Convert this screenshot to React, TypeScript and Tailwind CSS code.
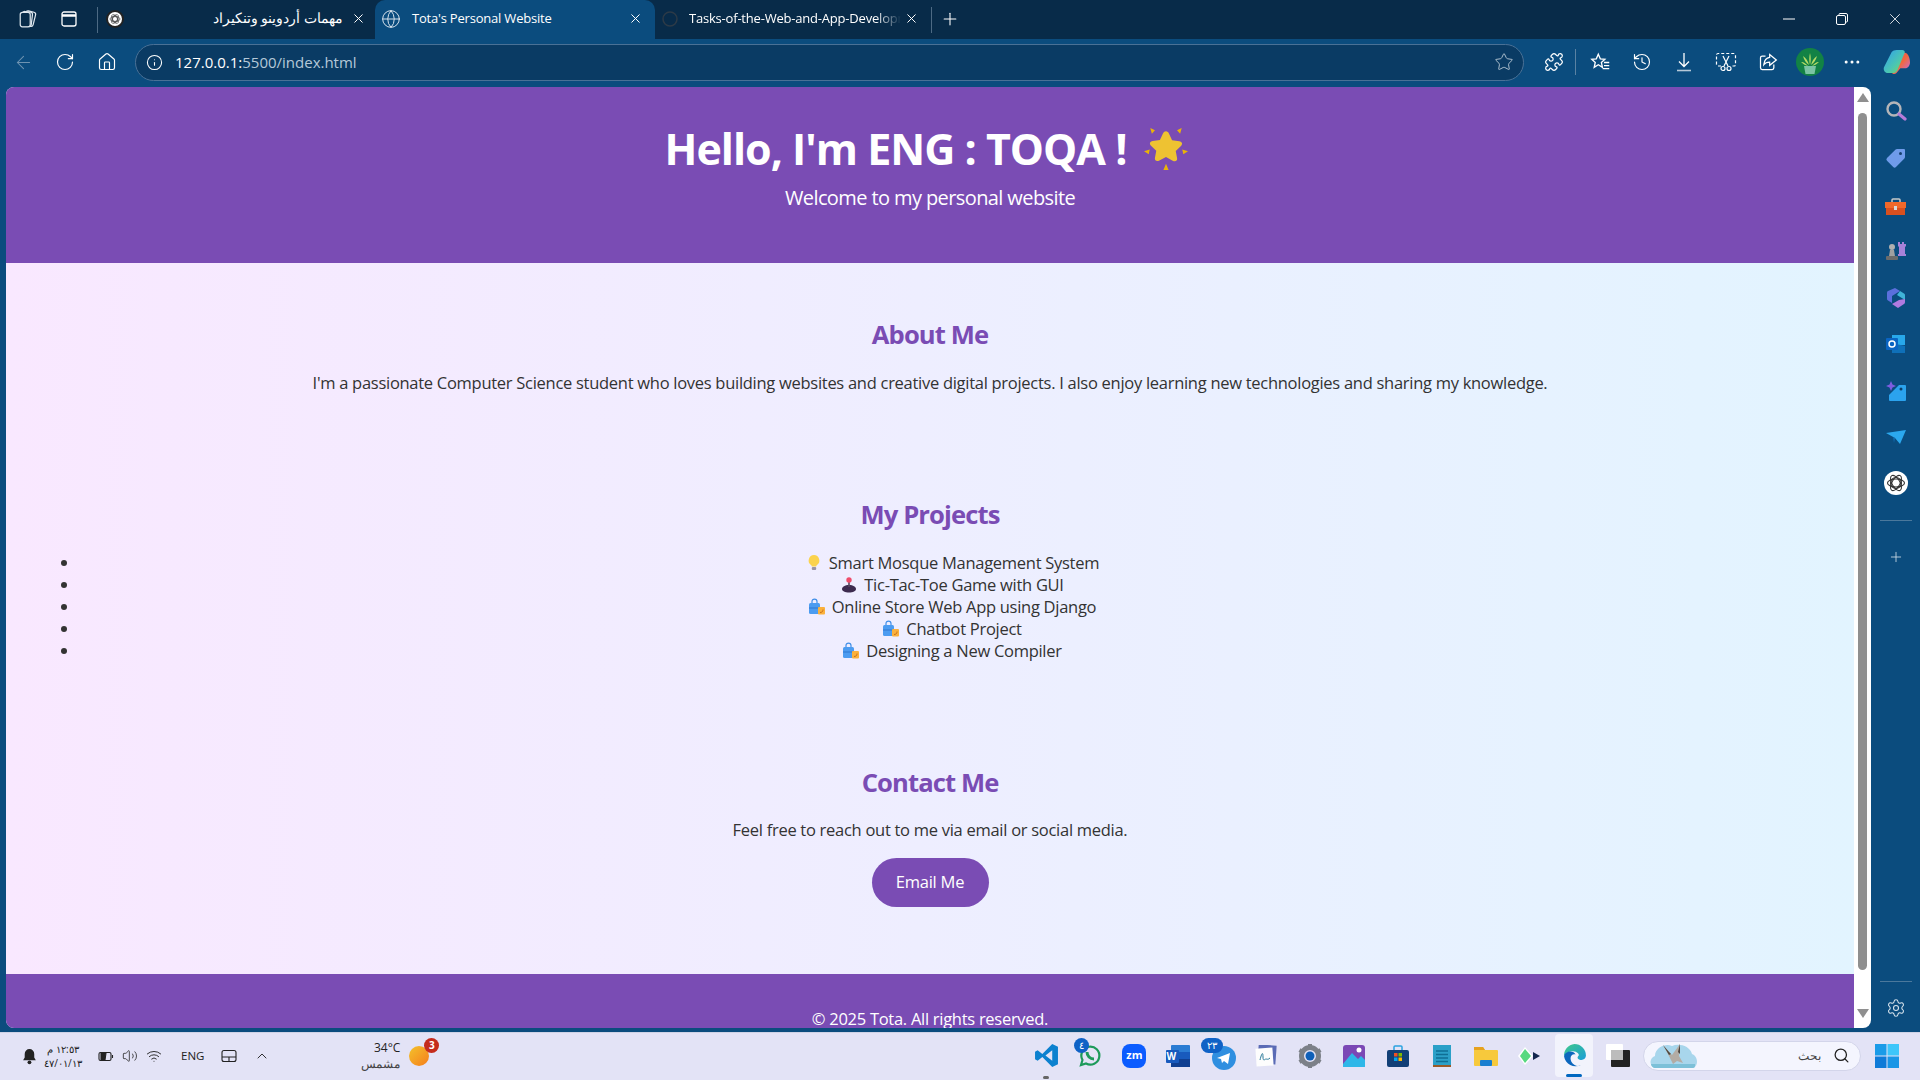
import {
  ArrowLeft,
  ChevronUp,
  Globe,
  History,
  Home,
  Info,
  MoreHorizontal,
  Plus,
  Puzzle,
  RotateCw,
  Search,
  Settings,
  Star,
  Volume2,
  Wifi,
  X,
} from 'lucide-react'

const FONT = 'font-["Open_Sans","Noto_Sans",sans-serif]'

const PROJECTS = [
  { icon: 'bulb', label: 'Smart Mosque Management System' },
  { icon: 'joy', label: 'Tic-Tac-Toe Game with GUI' },
  { icon: 'bag', label: 'Online Store Web App using Django' },
  { icon: 'bag', label: 'Chatbot Project' },
  { icon: 'bag', label: 'Designing a New Compiler' },
]

function GptIcon({ size = 16 }: { size?: number }) {
  return (
    <svg width={size} height={size} viewBox="0 0 24 24" fill="none" stroke="#333" strokeWidth="1.100">
      <circle cx="12" cy="12" r="12" fill="#fff" stroke="none" />
      <ellipse cx="12" cy="12" rx="8.500" ry="4" />
      <ellipse cx="12" cy="12" rx="8.500" ry="4" transform="rotate(60 12 12)" />
      <ellipse cx="12" cy="12" rx="8.500" ry="4" transform="rotate(120 12 12)" />
      <circle cx="12" cy="12" r="5.500" />
    </svg>
  )
}

function ProjectIcon({ name }: { name: string }) {
  if (name === 'bulb') {
    return (
      <svg width="18" height="18" viewBox="0 0 18 18" className="shrink-0">
        <path d="M9 1a5.500 5.500 0 0 0-3 10c.6.5.8 1 .8 1.600h4.400c0-.6.2-1.100.8-1.600A5.500 5.500 0 0 0 9 1z" fill="#fbd34d" />
        <rect x="6.800" y="13" width="4.400" height="3" rx="1" fill="#9a94a5" />
      </svg>
    )
  }
  if (name === 'joy') {
    return (
      <svg width="18" height="18" viewBox="0 0 18 18" className="shrink-0">
        <path d="M2 13c0-2 3-4 7-4s7 2 7 4-3 3.500-7 3.500S2 15 2 13z" fill="#3d2b4f" />
        <rect x="8.200" y="4" width="1.600" height="7" fill="#57465f" />
        <circle cx="9" cy="4" r="2.700" fill="#ef4c6a" />
      </svg>
    )
  }
  return (
    <svg width="18" height="18" viewBox="0 0 18 18" className="shrink-0">
      <path d="M4 5V3.500C4 2 5 1.200 6.500 1.200S9 2 9 3.500V5" fill="none" stroke="#3f8ee8" strokeWidth="1.200" />
      <rect x="1" y="5" width="11" height="11" rx="1.500" fill="#4c9cf1" />
      <rect x="1" y="9.500" width="11" height="1" fill="#2f76cf" />
      <rect x="10" y="9" width="7" height="7.500" rx="1" fill="#fbb13c" />
      <path d="M12 14.500c2 0 3-1 3-3" fill="none" stroke="#c9701a" strokeWidth="1" />
    </svg>
  )
}

function StarEmoji() {
  return (
    <svg width="44" height="44" viewBox="0 0 42 42" className="shrink-0">
      <path d="M21 5c1.300 0 2.200.9 2.800 2.200l3 6.300 6.900 1c2.800.4 3.400 2.800 1.600 4.500l-5 4.800 1.300 7c.4 2.400-1.800 3.600-3.800 2.500L21 29.500l-6.800 3.600c-2.100 1.100-4.200-.2-3.800-2.500l1.300-7-5-4.800c-1.800-1.700-1.200-4.100 1.600-4.500l6.900-1 3-6.300C18.800 5.900 19.700 5 21 5z" fill="#eec232" />
      <path d="M6 2l4.500 2-3 3.500zM36 2l-4.500 2 3 3.500zM0 24l5.500-1.500-1 4.500zM42 24l-5.500-1.500 1 4.500zM21 36l2.500 6h-5z" fill="#eab308" />
    </svg>
  )
}

function TabBar() {
  return (
    <div className="flex h-[39px] shrink-0 items-center bg-[#082b49] text-[13px] text-white">
      <div className="flex w-[50px] justify-center pb-[2px] pl-[6px]">
        <svg width="20" height="20" viewBox="0 0 18 18" fill="none" stroke="#dfe7ee" strokeWidth="1.100">
          <rect x="6" y="2" width="9" height="13" rx="2" transform="rotate(14 10 8)" />
          <rect x="3.500" y="2.500" width="9" height="13" rx="2" transform="rotate(7 8 9)" fill="#082b49" />
          <rect x="2" y="3" width="9" height="13" rx="2" fill="#082b49" />
        </svg>
      </div>
      <div className="flex w-[38px] justify-center pb-[2px]">
        <svg width="18" height="18" viewBox="0 0 18 18" fill="none" stroke="#fff" strokeWidth="1.300">
          <rect x="2" y="2" width="14" height="14" rx="2" />
          <path d="M2 5.500h14" strokeWidth="2.500" />
        </svg>
      </div>
      <div className="ml-[9px] h-[26px] w-px bg-[#4d6a84]" />
      <div className="flex h-full w-[277px] items-center pr-[9px] pb-[2px] pl-[8px]">
        <span className="flex h-[18px] w-[18px] items-center justify-center rounded-full bg-[#222]">
          <GptIcon size={14} />
        </span>
        <span className={`flex-1 truncate pr-[8px] text-right text-[13.500px] ${FONT}`} dir="rtl">
          مهمات أردوينو وتنكيراد
        </span>
        <X size={15} strokeWidth={1.600} />
      </div>
      <div className="flex h-full w-[280px] items-center rounded-t-[10px] bg-[#0b4c7e] pr-[12px] pb-[2px] pl-[6px]">
        <Globe size={20} strokeWidth={1.200} className="text-[#d6e2ec]" />
        <span className={`ml-[11px] flex-1 tracking-[-0.2px] ${FONT}`}>Tota's Personal Website</span>
        <X size={15} strokeWidth={1.600} />
      </div>
      <div className="flex h-full w-[276px] items-center pr-[12px] pb-[2px] pl-[6px]">
        <svg width="18" height="18" viewBox="0 0 18 18" fill="none" stroke="#2c3a47" strokeWidth="1.500">
          <circle cx="9" cy="9" r="7" />
        </svg>
        <span className={`ml-[10px] w-[212px] overflow-hidden whitespace-nowrap tracking-[-0.2px] [mask-image:linear-gradient(to_right,black_88%,transparent)] ${FONT}`}>
          Tasks-of-the-Web-and-App-Development
        </span>
        <span className="flex-1" />
        <X size={15} strokeWidth={1.600} />
      </div>
      <div className="h-[26px] w-px bg-[#4d6a84]" />
      <div className="flex w-[36px] justify-center pb-[2px]">
        <Plus size={20} strokeWidth={1.300} />
      </div>
      <div className="flex-1" />
      <svg width="14" height="14" viewBox="0 0 14 14" className="mr-[39px] mb-[2px]" stroke="#fff" strokeWidth="1">
        <path d="M1 7h12" />
      </svg>
      <svg width="14" height="14" viewBox="0 0 14 14" fill="none" className="mr-[37px] mb-[2px]" stroke="#fff" strokeWidth="1">
        <rect x="1.500" y="3.500" width="9" height="9" rx="1.500" />
        <path d="M4 3V2.500A1 1 0 0 1 5 1.500h6a1.500 1.500 0 0 1 1.500 1.500v6a1 1 0 0 1-1 1H11" />
      </svg>
      <X size={18} strokeWidth={1.100} className="mr-[16px] mb-[2px]" />
    </div>
  )
}

function ToolCell({ children }: { children: React.ReactNode }) {
  return <div className="flex w-[42px] shrink-0 items-center justify-center">{children}</div>
}

function Toolbar() {
  return (
    <div className="flex h-[48px] shrink-0 items-center bg-[#0b4c7e] pb-[2px] pl-[2px] text-white">
      <ToolCell>
        <ArrowLeft size={21} strokeWidth={1.200} className="text-[#6e93b1]" />
      </ToolCell>
      <ToolCell>
        <RotateCw size={20} strokeWidth={1.400} />
      </ToolCell>
      <ToolCell>
        <Home size={20} strokeWidth={1.400} />
      </ToolCell>
      <div className="ml-[7px] flex h-[37px] w-[1389px] items-center rounded-full border border-[#4a7196] bg-[#0a3b64] pr-[9px] pl-[10px]">
        <Info size={17} strokeWidth={1.500} />
        <span className={`ml-[12px] flex-1 text-[15px] ${FONT}`}>
          127.0.0.1:<span className="text-[#b4c8d8]">5500/index.html</span>
        </span>
        <Star size={20} strokeWidth={1.200} className="text-[#a9bccb]" />
      </div>
      <div className="ml-[9px] flex items-center">
        <ToolCell>
          <Puzzle size={20} strokeWidth={1.500} />
        </ToolCell>
        <div className="h-[26px] w-px bg-[#5a82a3]" />
        <div className="ml-[3px] flex">
          <ToolCell>
            <svg width="21" height="21" viewBox="0 0 24 24" fill="none" stroke="#fff" strokeWidth="1.500">
              <path d="M9.500 2.500l2.300 5.300 5.200.5-4 3.600 1.200 5.600-4.700-3-4.700 3 1.200-5.600-4-3.600 5.200-.5z" />
              <path d="M16 12h6M16 15.500h6M14.500 19h7.500" />
            </svg>
          </ToolCell>
          <ToolCell>
            <History size={20} strokeWidth={1.400} />
          </ToolCell>
          <ToolCell>
            <svg width="20" height="20" viewBox="0 0 20 20" fill="none" stroke="#fff" strokeWidth="1.300">
              <path d="M10 1v13M5 9.500l5 5 5-5" />
              <path d="M3 18.500h14" stroke="#b6c8d8" strokeWidth="1.600" />
            </svg>
          </ToolCell>
          <ToolCell>
            <svg width="22" height="22" viewBox="0 0 22 22" fill="none" stroke="#fff" strokeWidth="1.200">
              <path d="M6 15H3a1.500 1.500 0 0 1-1.500-1.500V4A1.500 1.500 0 0 1 3 2.500h16A1.500 1.500 0 0 1 20.500 4v9.500A1.500 1.500 0 0 1 19 15h-3" strokeDasharray="3 2" />
              <path d="M8 5l5 10M14 5L9 15" />
              <circle cx="8" cy="17.500" r="2" />
              <circle cx="14" cy="17.500" r="2" />
            </svg>
          </ToolCell>
          <ToolCell>
            <svg width="20" height="20" viewBox="0 0 24 24" fill="none" stroke="#fff" strokeWidth="1.500">
              <path d="M9 5H5a2 2 0 0 0-2 2v12a2 2 0 0 0 2 2h12a2 2 0 0 0 2-2v-4" />
              <path d="M14 3l8 6.500-8 6.500v-4c-3.500 0-5.500 1-7 3 .5-4.500 3-8 7-8.500z" />
            </svg>
          </ToolCell>
          <ToolCell>
            <svg width="28" height="28" viewBox="0 0 28 28">
              <circle cx="14" cy="14" r="14" fill="#128245" />
              <path d="M14 5c-1 4-1 8 0 12 1-4 1-8 0-12zM7 8c1 4 3 7 6 9-1-4-3-7-6-9zM21 8c-1 4-3 7-6 9 1-4 3-7 6-9zM5 14c2 2 4 3 7 4-2-2-4-4-7-4zM23 14c-2 2-4 3-7 4 2-2 4-4 7-4z" fill="#b6dc65" />
              <path d="M8 18h12l-1.500 8h-9z" fill="#7ac4a4" />
            </svg>
          </ToolCell>
          <ToolCell>
            <MoreHorizontal size={20} strokeWidth={1.600} />
          </ToolCell>
          <div className="ml-[2px] flex w-[42px] shrink-0 items-center justify-center">
            <svg width="27" height="27" viewBox="0 0 28 28">
              <defs>
                <linearGradient id="copA" x1="0" y1="0" x2="1" y2="1">
                  <stop offset="0" stopColor="#2f9ff0" />
                  <stop offset="0.600" stopColor="#4cc7b0" />
                  <stop offset="1" stopColor="#8ad64a" />
                </linearGradient>
                <linearGradient id="copB" x1="0" y1="0" x2="1" y2="1">
                  <stop offset="0" stopColor="#e8487a" />
                  <stop offset="0.500" stopColor="#f2683c" />
                  <stop offset="1" stopColor="#c06ef0" />
                </linearGradient>
              </defs>
              <path d="M19 6c1-2 4-3 6-1s3 6 3 9-2 6-5 6h-5l-4 5c-2 2-5 1-5-2l4-10c1-3 3-7 6-7z" fill="url(#copB)" />
              <path d="M9 3c1-1 3-2 5-2h6c3 0 3 3 2 4l-7 17c-1 2-3 3-5 3H5c-3 0-5-3-4-6z" fill="url(#copA)" />
            </svg>
          </div>
        </div>
      </div>
    </div>
  )
}

function Page() {
  return (
    <div className={`flex min-w-0 flex-1 flex-col overflow-hidden bg-gradient-to-r from-[#f9e8ff] to-[#e2f4ff] text-[#333] ${FONT}`}>
      <header className="h-[176px] shrink-0 bg-[#7a4cb4] pt-[31px] text-center text-white">
        <h1 className="flex h-[60px] items-center justify-center gap-[18px] pr-[7px] text-[43px] leading-none font-bold tracking-[-1px]">
          Hello, I'm ENG : TOQA !
          <StarEmoji />
        </h1>
        <p className="mt-[6px] text-[20px] leading-[28px] tracking-[-0.6px]">Welcome to my personal website</p>
      </header>
      <main className="flex-1">
        <section className="h-[172px] pt-[54px] text-center">
          <h2 className="text-[25.600px] leading-[36px] font-bold tracking-[-0.9px] text-[#7a4cb4]">About Me</h2>
          <p className="mt-[18px] text-[16.500px] leading-[24px] tracking-[-0.28px]">
            I'm a passionate Computer Science student who loves building websites and creative digital projects. I also enjoy learning new technologies and sharing my knowledge.
          </p>
        </section>
        <section className="h-[270px] pt-[62px] text-center">
          <h2 className="text-[25.600px] leading-[36px] font-bold tracking-[-0.9px] text-[#7a4cb4]">My Projects</h2>
          <ul className="mt-[19px] list-disc pr-[30px] pl-[74px] text-[16.500px] leading-[22px] tracking-[-0.28px]">
            {PROJECTS.map((p) => (
              <li key={p.label}>
                <span className="inline-flex items-center gap-[6px] align-top">
                  <ProjectIcon name={p.icon} />
                  {p.label}
                </span>
              </li>
            ))}
          </ul>
        </section>
        <section className="pt-[60px] text-center">
          <h2 className="text-[25.600px] leading-[36px] font-bold tracking-[-0.9px] text-[#7a4cb4]">Contact Me</h2>
          <p className="mt-[17px] text-[16.500px] leading-[24px] tracking-[-0.28px]">
            Feel free to reach out to me via email or social media.
          </p>
          <button className="mt-[16px] h-[49px] w-[117px] rounded-full bg-[#7a4cb4] text-[16.500px] tracking-[-0.25px] text-white">
            Email Me
          </button>
        </section>
      </main>
      <footer className="h-[54px] shrink-0 overflow-hidden bg-[#7a4cb4] pt-[33px] text-center text-[16.500px] leading-[24px] tracking-[-0.28px] text-white">
        © 2025 Tota. All rights reserved.
      </footer>
    </div>
  )
}

function Scrollbar() {
  return (
    <div className="flex w-[17px] shrink-0 flex-col items-center bg-white">
      <div className="mt-[6px] h-0 w-0 border-x-[6px] border-b-[9px] border-x-transparent border-b-[#8f8f8f]" />
      <div className="mt-[11px] h-[857px] w-[9px] rounded-full bg-[#8f8f8f]" />
      <div className="mt-[39px] h-0 w-0 border-x-[6px] border-t-[9px] border-x-transparent border-t-[#8f8f8f]" />
    </div>
  )
}

function SideCell({ children }: { children: React.ReactNode }) {
  return <div className="flex h-[46.400px] items-center justify-center">{children}</div>
}

function Sidebar() {
  return (
    <div className="flex w-[49px] shrink-0 flex-col bg-[#0b4c7e] pt-[1px]">
      <SideCell>
        <svg width="22" height="22" viewBox="0 0 22 22" fill="none">
          <circle cx="9" cy="9" r="6.500" stroke="#b5b5b8" strokeWidth="2.400" />
          <path d="M14 14l6 5" stroke="#b57bd8" strokeWidth="3.200" strokeLinecap="round" />
        </svg>
      </SideCell>
      <SideCell>
        <svg width="22" height="22" viewBox="0 0 22 22">
          <path d="M12 2h7a1 1 0 0 1 1 1v7a2 2 0 0 1-.6 1.400L11 20a2 2 0 0 1-2.800 0L2 13.800a2 2 0 0 1 0-2.800l8.600-8.400A2 2 0 0 1 12 2z" fill="#6f9bea" />
          <circle cx="15.500" cy="6.500" r="1.500" fill="#17406e" />
        </svg>
      </SideCell>
      <div className="pt-[3px] pb-[-2px]">
        <SideCell>
          <svg width="22" height="20" viewBox="0 0 22 20">
            <path d="M7 5V3a1 1 0 0 1 1-1h6a1 1 0 0 1 1 1v2" fill="none" stroke="#c9c9c9" strokeWidth="1.500" />
            <rect x="0" y="5" width="21" height="6" fill="#f0682a" />
            <rect x="1" y="11" width="19" height="7" fill="#d9501f" />
            <rect x="9" y="9" width="3" height="4" fill="#d8d8d8" />
          </svg>
        </SideCell>
      </div>
      <div className="-mt-[2px]">
        <SideCell>
          <svg width="22" height="22" viewBox="0 0 22 22">
            <path d="M13 2h2v2h2V2h2v2h2v2l-1 1v7h1v2h-8v-2h1V7l-1-1z" fill="#a781d8" />
            <circle cx="7" cy="7" r="3" fill="#b0b0b0" />
            <path d="M5 10h4l1 6H4z" fill="#a0a0a0" />
            <rect x="1" y="16" width="12" height="4" rx="1" fill="#6b6b6b" />
          </svg>
        </SideCell>
      </div>
      <SideCell>
        <svg width="20" height="22" viewBox="0 0 20 22">
          <path d="M9 1l5 3-8 5v7l-4-2.500a2 2 0 0 1-1-2V6a2 2 0 0 1 1-2z" fill="#5b6fdc" />
          <path d="M14 4l4 2.500a2 2 0 0 1 1 2V13l-8-5z" fill="#40b3d8" />
          <path d="M19 12v3a2 2 0 0 1-1 2l-6 4-6-4 7-4z" fill="#b07ae0" />
        </svg>
      </SideCell>
      <SideCell>
        <svg width="20" height="20" viewBox="0 0 20 20">
          <rect x="6" y="1" width="13" height="10" fill="#28a8ea" />
          <path d="M6 9l13 3v7H6z" fill="#0f70b8" />
          <rect x="0" y="4" width="12" height="12" rx="1" fill="#0a64c2" />
          <circle cx="6" cy="10" r="3" fill="none" stroke="#fff" strokeWidth="1.500" />
        </svg>
      </SideCell>
      <SideCell>
        <svg width="22" height="22" viewBox="0 0 22 22">
          <path d="M14 5h6a1 1 0 0 1 1 1v14a1 1 0 0 1-1 1H5a1 1 0 0 1-1-1v-5z" fill="#2ba3ee" />
          <circle cx="16" cy="9" r="1.500" fill="#0b3e6a" />
          <path d="M6 1l1.500 3.500L11 6 7.500 7.500 6 11 4.500 7.500 1 6l3.500-1.500z" fill="#7c5de0" />
        </svg>
      </SideCell>
      <SideCell>
        <svg width="22" height="16" viewBox="0 0 22 16">
          <path d="M1 4l20-3-6 14-5-6z" fill="#2ba8ee" />
          <path d="M8 8l2 1-1 5z" fill="#0f6bb0" />
        </svg>
      </SideCell>
      <SideCell>
        <GptIcon size={24} />
      </SideCell>
      <div className="mx-auto mt-[13px] h-px w-[32px] bg-[#4b789c]" />
      <div className="mt-[28px] flex justify-center text-[#d8e3ec]">
        <Plus size={16} strokeWidth={1.200} />
      </div>
      <div className="flex-1" />
      <div className="mx-auto h-px w-[32px] bg-[#4b789c]" />
      <div className="flex h-[46px] items-center justify-center pt-[10px] pb-[4px] text-[#d8e3ec]">
        <Settings size={20} strokeWidth={1.300} />
      </div>
    </div>
  )
}

function TaskApp({ children }: { children: React.ReactNode }) {
  return <div className="relative flex h-[46px] w-[44px] shrink-0 items-center justify-center">{children}</div>
}

function Taskbar() {
  return (
    <div className={`flex h-[48px] shrink-0 items-center border-t border-[#cfd3e6] bg-[#e3e3f6] pb-[2px] text-[#222] ${FONT}`}>
      <div className="flex w-[44px] justify-end pr-[5px]">
        <svg width="18" height="18" viewBox="0 0 17 17">
          <path d="M8 2a4.500 4.500 0 0 0-4.500 4.500V10L2 12.500h12L12.500 10V6.500A4.500 4.500 0 0 0 8 2z" fill="#222" />
          <circle cx="8" cy="14.500" r="1.800" fill="#222" />
        </svg>
      </div>
      <div className="w-[38px] text-center text-[10px] leading-[14px] whitespace-nowrap">
        <div dir="rtl">١٢:٥٣ م</div>
        <div>٤٧/٠١/١٣</div>
      </div>
      <div className="ml-[16px] flex items-center gap-[8px]">
        <svg width="16" height="16" viewBox="0 0 16 16" fill="none" stroke="#222" strokeWidth="1.100">
          <rect x="1" y="4.500" width="12" height="8" rx="1.500" />
          <path d="M14.500 7v3" />
          <path d="M3 5h5l-1 7H3z" fill="#222" />
        </svg>
        <Volume2 size={16} strokeWidth={1.200} />
        <Wifi size={16} strokeWidth={1.400} />
      </div>
      <span className="ml-[19px] text-[11.500px]">ENG</span>
      <svg width="16" height="14" viewBox="0 0 16 14" fill="none" stroke="#222" strokeWidth="1.100" className="ml-[17px]">
        <rect x="1" y="1.500" width="14" height="11" rx="2" />
        <path d="M1 8h14M8 8v4.500" />
      </svg>
      <ChevronUp size={16} strokeWidth={1.400} className="ml-[17px]" />
      <div className="ml-[72px] w-[58px] text-right leading-[16px]">
        <div className="text-[12px]">34°C</div>
        <div className="text-[12px] text-[#444]">مشمس</div>
      </div>
      <div className="relative ml-[9px] h-[20px] w-[20px] rounded-full bg-gradient-to-br from-[#f2c22c] to-[#f47c1c]">
        <span className="absolute top-[-8px] right-[-10px] flex h-[15px] w-[15px] items-center justify-center rounded-full bg-[#c42b1c] text-[10px] font-bold text-white">
          3
        </span>
      </div>
      <div className="ml-[595px] flex items-center">
        <TaskApp>
          <svg width="25" height="25" viewBox="0 0 24 24">
            <path d="M17.500 1L8 10.500 3.500 7 1 8.500v7L3.500 17 8 13.500 17.500 23l5.500-2.500v-17zM17.500 7v10L11 12z" fill="#0c81cf" fillRule="evenodd" />
          </svg>
          <span className="absolute bottom-[0px] h-[3px] w-[6px] rounded-full bg-[#666]" />
        </TaskApp>
        <TaskApp>
          <svg width="24" height="24" viewBox="0 0 24 24" fill="none" stroke="#1d9a5a" strokeWidth="2.200">
            <path d="M3 21l1.500-5a9 9 0 1 1 3.500 3.500z" />
            <path d="M9 8c0 4 3 7 7 7" strokeWidth="3" />
          </svg>
          <span className="absolute top-[5px] left-[6px] flex h-[15px] w-[15px] items-center justify-center rounded-full bg-[#0f62c6] text-[10px] text-white">
            ٤
          </span>
        </TaskApp>
        <TaskApp>
          <div className="flex h-[24px] w-[24px] items-center justify-center rounded-[8px] bg-[#0b5cff] text-[11px] font-bold text-white">
            zm
          </div>
        </TaskApp>
        <TaskApp>
          <svg width="25" height="22" viewBox="0 0 25 22">
            <rect x="5" y="0" width="19" height="22" rx="1" fill="#2b7cd3" />
            <rect x="5" y="7" width="19" height="7" fill="#185abd" />
            <rect x="5" y="14" width="19" height="8" fill="#103f91" />
            <rect x="0" y="5" width="13" height="13" rx="1" fill="#185abd" />
          </svg>
          <span className="absolute top-[16px] left-[10px] text-[10px] font-bold text-white">W</span>
        </TaskApp>
        <TaskApp>
          <svg width="24" height="24" viewBox="0 0 24 24" className="mt-[4px] ml-[4px]">
            <circle cx="12" cy="12" r="12" fill="#2f8fe0" />
            <path d="M5 12l13-5-2 11-4-3-2 2-1-4z" fill="#fff" />
          </svg>
          <span className="absolute top-[5px] left-[1px] flex h-[15px] w-[22px] items-center justify-center rounded-full bg-[#0f62c6] text-[10px] text-white">
            ٢٣
          </span>
        </TaskApp>
        <TaskApp>
          <svg width="22" height="22" viewBox="0 0 22 22">
            <rect x="3" y="0" width="18" height="19" fill="#5a6bb5" transform="rotate(4 12 10)" />
            <rect x="1" y="3" width="17" height="18" fill="#fdfdfd" transform="rotate(-4 10 12)" />
            <path d="M5 15c2-8 3-8 3-3s2 2 3 2 2 1 4-1" fill="none" stroke="#2a7a9a" strokeWidth="1" />
          </svg>
        </TaskApp>
        <TaskApp>
          <svg width="24" height="24" viewBox="0 0 24 24">
            <circle cx="12" cy="12" r="8.500" fill="none" stroke="#7c8088" strokeWidth="5" />
            <circle cx="12" cy="12" r="4.500" fill="#0f5fb8" />
            <path d="M12 0v4M12 20v4M1.500 6l3.500 2M19 16l3.500 2M1.500 18l3.500-2M19 8l3.500-2" stroke="#7c8088" strokeWidth="4" />
          </svg>
        </TaskApp>
        <TaskApp>
          <svg width="22" height="22" viewBox="0 0 22 22">
            <rect width="22" height="22" rx="3" fill="#7b48b5" />
            <path d="M0 19l9-11 6 6 3-3 4 4v6a3 3 0 0 1-3 3H3a3 3 0 0 1-3-3z" fill="#2eb7e8" />
            <circle cx="16" cy="5" r="2.500" fill="#fff" />
          </svg>
        </TaskApp>
        <TaskApp>
          <svg width="24" height="24" viewBox="0 0 24 24">
            <path d="M8 6V3a1 1 0 0 1 1-1h6a1 1 0 0 1 1 1v3" fill="none" stroke="#2ba3e0" strokeWidth="1.500" />
            <rect x="1" y="6" width="22" height="17" rx="2" fill="#123f76" />
            <rect x="8" y="9" width="3.500" height="3.500" fill="#f25022" />
            <rect x="12.500" y="9" width="3.500" height="3.500" fill="#7fba00" />
            <rect x="8" y="13.500" width="3.500" height="3.500" fill="#00a4ef" />
            <rect x="12.500" y="13.500" width="3.500" height="3.500" fill="#ffb900" />
          </svg>
        </TaskApp>
        <TaskApp>
          <svg width="20" height="24" viewBox="0 0 20 24">
            <rect x="1" y="1" width="18" height="22" fill="#2ba0c8" />
            <rect x="1" y="21" width="18" height="2" fill="#9a5a28" />
            <path d="M4 7h12M4 10.500h12M4 14h12M4 17.500h12" stroke="#0f6f95" strokeWidth="1.400" />
          </svg>
        </TaskApp>
        <TaskApp>
          <svg width="24" height="20" viewBox="0 0 24 20">
            <path d="M0 2a1 1 0 0 1 1-1h8l2 3h12a1 1 0 0 1 1 1v14a1 1 0 0 1-1 1H1a1 1 0 0 1-1-1z" fill="#f7c93c" />
            <path d="M0 1h9l2 3H0z" fill="#e6a21f" />
            <rect x="6" y="14" width="12" height="6" rx="1" fill="#1a7fd0" />
          </svg>
        </TaskApp>
        <TaskApp>
          <svg width="24" height="20" viewBox="0 0 24 20">
            <path d="M7 1l8 9-8 9-7-9z" fill="#fff" />
            <path d="M7 3l6 7-6 7-5-7z" fill="#57d97f" />
            <path d="M15 6l7 4-7 4z" fill="#14284f" />
          </svg>
        </TaskApp>
        <TaskApp>
          <div className="absolute inset-x-[3px] top-[1px] bottom-[2px] rounded-[4px] bg-[#f2f3fc]" />
          <svg width="25" height="25" viewBox="0 0 24 24" className="relative">
            <defs>
              <linearGradient id="edgeA" x1="0" y1="0" x2="1" y2="1">
                <stop offset="0" stopColor="#3fc98a" />
                <stop offset="1" stopColor="#1a9dd8" />
              </linearGradient>
            </defs>
            <path d="M12 1a11 11 0 0 1 11 11c0 3-3 5-6 4s-2-3-1-4-2-5-7-4-7 4-7 5A11 11 0 0 1 12 1z" fill="url(#edgeA)" />
            <path d="M2 13c0-5 9-7 11-2-4-1-6 3-4 7s7 5 9 3a11 11 0 0 1-16-8z" fill="#0c67bd" />
          </svg>
          <span className="absolute bottom-[2px] h-[3px] w-[16px] rounded-full bg-[#0067c0]" />
        </TaskApp>
        <TaskApp>
          <svg width="24" height="24" viewBox="0 0 24 24">
            <rect x="0" y="0" width="17" height="16" rx="1" fill="#fff" />
            <rect x="5" y="6" width="19" height="17" rx="1" fill="#222" />
            <rect x="5" y="6" width="12" height="10" fill="#bcbcbc" />
          </svg>
        </TaskApp>
      </div>
      <div className="ml-[3px] flex h-[30px] w-[218px] shrink-0 items-center rounded-full border border-[#d3d5ea] bg-[#f4f5fe] pr-[10px] pl-[5px]">
        <svg width="50" height="26" viewBox="0 0 50 26">
          <path d="M6 25c-6-2-6-10 0-12 0-8 10-13 17-10 7-3 18 0 20 8 6 2 7 12 1 14z" fill="#a8d6ec" />
          <path d="M2 21h44v2c0 1-1 2-2 2H6c-2 0-4-2-4-4z" fill="#7cc0d8" />
          <path d="M14 2l9 10 8-11-1 12 4 7-6-2-4 3-4-8z" fill="#b3aca4" />
          <path d="M14 2l6 7 2 2-2 1zM31 1l-2 8 2 2z" fill="#4d4740" />
        </svg>
        <span className="flex-1 pr-[1px] text-right text-[12px] text-[#444]">بحث</span>
        <Search size={17} strokeWidth={1.800} className="ml-[11px] text-[#222]" />
      </div>
      <div className="ml-[14px]">
        <svg width="24" height="24" viewBox="0 0 24 24">
          <rect x="0" y="0" width="11.500" height="11.500" fill="#1a9be8" />
          <rect x="12.500" y="0" width="11.500" height="11.500" fill="#3ec6fa" />
          <rect x="0" y="12.500" width="11.500" height="11.500" fill="#0f7bd8" />
          <rect x="12.500" y="12.500" width="11.500" height="11.500" fill="#1a96e6" />
        </svg>
      </div>
    </div>
  )
}

export default function App() {
  return (
    <div className="flex h-[1080px] w-[1920px] flex-col overflow-hidden bg-[#0b4c7e]">
      <TabBar />
      <Toolbar />
      <div className="flex h-[941px] min-h-0 pl-[6px]">
        <div className="flex min-w-0 flex-1 overflow-hidden rounded-[8px]">
          <Page />
          <Scrollbar />
        </div>
        <Sidebar />
      </div>
      <div className="h-[4px] shrink-0" />
      <Taskbar />
    </div>
  )
}
